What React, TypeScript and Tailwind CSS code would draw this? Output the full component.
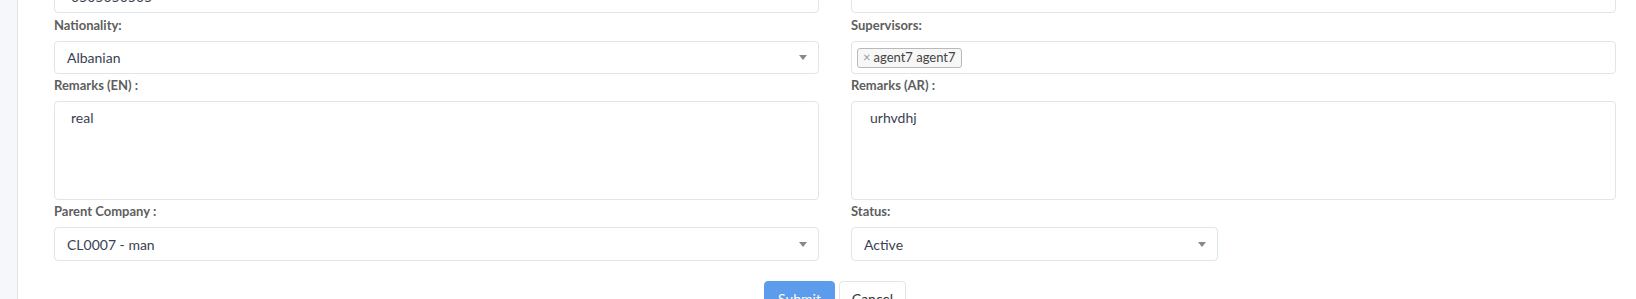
import type { ReactNode } from "react";

const font = { fontFamily: "Lato, 'Open Sans', sans-serif" };

const Label = ({ children, first }: { children: ReactNode; first?: boolean }) => (
  <label
    className={
      first
        ? "block h-[28px] pt-[3px] leading-[18px] text-[13px] font-bold text-[#5e5e5e]"
        : "block h-[27px] pt-[2px] leading-[18px] text-[13px] font-bold text-[#5e5e5e]"
    }
  >
    {children}
  </label>
);

const Caret = () => (
  <span className="ml-auto mr-[11px] h-0 w-0 border-x-[4px] border-t-[5px] border-x-transparent border-t-[#888888]" />
);

const SelectBox = ({ value, tall }: { value: string; tall?: boolean }) => (
  <div
    className={
      tall
        ? "flex h-[34px] items-center rounded-[4px] border border-[#dde6e9] bg-white pl-[12px] text-[14px] text-[#3a3f51]"
        : "flex h-[33px] items-center rounded-[4px] border border-[#dde6e9] bg-white pl-[12px] text-[14px] text-[#3a3f51]"
    }
  >
    <span>{value}</span>
    <Caret />
  </div>
);

const App = () => {
  return (
    <div className="flex h-[299px] overflow-hidden bg-white" style={font}>
      <div className="w-[18px] shrink-0 border-r border-[#e1e5ea] bg-[#f5f7fa]" />

      <div className="flex-1 pl-[36px] pr-[20px]">
        <div className="-mt-[21px] grid grid-cols-2 gap-x-[32px]">
          {/* phone row, mostly scrolled off */}
          <div className="flex h-[34px] items-center rounded-[4px] border border-[#dde6e9] pl-[16px] text-[14px] text-[#3a3f51]">
            0505050505
          </div>
          <div className="h-[34px] rounded-[4px] border border-[#dde6e9]" />

          <div>
            <Label first>Nationality:</Label>
            <SelectBox value="Albanian" />
          </div>
          <div>
            <Label first>Supervisors:</Label>
            <div className="flex h-[33px] items-start rounded-[4px] border border-[#dde6e9] bg-white pl-[5px] pt-[6px]">
              <span className="flex h-[20px] items-center rounded-[3px] border border-[#b9b9b9] bg-[#f7f7f7] px-[5px] text-[13px] text-[#444444]">
                <span className="mr-[3px] text-[#999999]">×</span>
                agent7 agent7
              </span>
            </div>
          </div>

          <div>
            <Label>Remarks (EN) :</Label>
            <div className="h-[99px] rounded-[4px] border border-[#dde6e9] bg-white pl-[16px] pt-[6px] text-[14px] leading-[20px] text-[#3a3f51]">
              real
            </div>
          </div>
          <div>
            <Label>Remarks (AR) :</Label>
            <div className="h-[99px] rounded-[4px] border border-[#dde6e9] bg-white pl-[18px] pt-[6px] text-[14px] leading-[20px] text-[#3a3f51]">
              urhvdhj
            </div>
          </div>

          <div>
            <Label>Parent Company :</Label>
            <SelectBox value="CL0007 - man" tall />
          </div>
          <div className="grid grid-cols-2 gap-x-[32px]">
            <div>
              <Label>Status:</Label>
              <SelectBox value="Active" tall />
            </div>
          </div>
        </div>

        <div className="mt-[20px] flex justify-center gap-[4px]">
          <button className="h-[34px] w-[71px] rounded-[4px] border border-[#5d9cec] bg-[#5d9cec] text-[14px] text-white">
            Submit
          </button>
          <button className="h-[34px] w-[67px] rounded-[4px] border border-[#e4e4e4] bg-white text-[14px] text-[#333333]">
            Cancel
          </button>
        </div>
      </div>
    </div>
  );
};

export default App;
